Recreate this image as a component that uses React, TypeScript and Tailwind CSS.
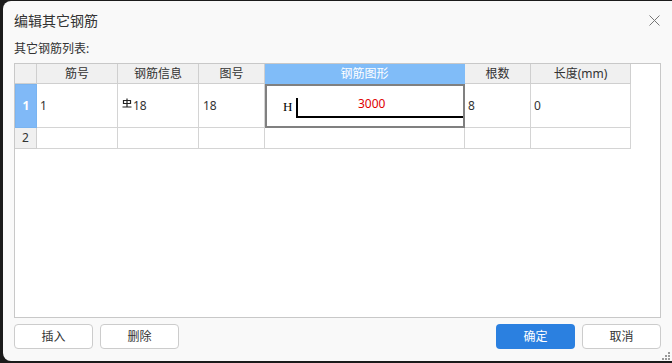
import React from "react";

const font = { fontFamily: '"Noto Sans", "Noto Sans CJK SC", sans-serif' };

const cols = [
  { title: "筋号", w: "w-[81px]" },
  { title: "钢筋信息", w: "w-[81px]" },
  { title: "图号", w: "w-[66px]" },
  { title: "钢筋图形", w: "w-[200px]", active: true },
  { title: "根数", w: "w-[66px]" },
  { title: "长度(mm)", w: "w-[100px]" },
];

function RebarSymbol() {
  return (
    <svg width="10" height="10" viewBox="0 0 10 10" className="mb-[5px] mr-[1px]">
      <path d="M1.5 2.5 h7 v3 h-7 z" fill="none" stroke="#222" strokeWidth="1.2" />
      <path d="M5 0.5 v8.5 M0.5 9 h9" fill="none" stroke="#222" strokeWidth="1.2" />
    </svg>
  );
}

function Shape() {
  return (
    <div className="relative h-full w-full">
      <span
        className="absolute left-[16px] top-[13px] text-[13px] leading-[15px] text-black"
        style={{ fontFamily: '"Liberation Serif", serif' }}
      >
        H
      </span>
      <div className="absolute left-[29px] top-[12px] h-[20px] w-[167px] border-b-2 border-l-2 border-black" />
      <span className="absolute left-[91px] top-[9px] text-[12px] text-[#e00000]">3000</span>
    </div>
  );
}

export default function App() {
  return (
    <div className="h-[363px] w-[672px] overflow-hidden bg-[#1b1b1b] pl-[3px] pt-[1px]" style={font}>
      <div className="flex h-[360px] w-[700px] flex-col rounded-[8px] bg-[#f9f9f9] text-[#333]">
        <div className="flex h-[38px] w-[657px] items-center justify-between pl-[11px]">
          <span className="text-[14px]">编辑其它钢筋</span>
          <svg width="11" height="11" viewBox="0 0 11 11" className="mt-[1px]">
            <path d="M0.5 0.5 L10.5 10.5 M10.5 0.5 L0.5 10.5" stroke="#777" strokeWidth="1" />
          </svg>
        </div>
        <div className="ml-[11px] h-[24px] pt-[1px] text-[12px]">其它钢筋列表:</div>
        <div className="ml-[11px] h-[255px] w-[647px] border border-[#c8c8c8] bg-white text-[12px]">
          <div className="flex h-[20px]">
            <div className="w-[22px] border-b border-r border-[#cfcfcf] bg-[#f0f0f0]" />
            {cols.map((c) => (
              <div
                key={c.title}
                className={`${c.w} flex items-center justify-center border-b border-r ${
                  c.active ? "border-[#80bcf8] bg-[#80bcf8] text-white" : "border-[#cfcfcf] bg-[#f0f0f0] text-[#333]"
                }`}
              >
                {c.title}
              </div>
            ))}
          </div>
          <div className="flex h-[44px]">
            <div className="flex w-[22px] items-center justify-center border border-[#7ab4f0] bg-[#80b9f7] font-bold text-white">
              1
            </div>
            <div className="flex w-[81px] items-center border-b border-r border-[#d4d4d4] pl-[3px]">1</div>
            <div className="flex w-[81px] items-center border-b border-r border-[#d4d4d4] pl-[4px]">
              <RebarSymbol />
              18
            </div>
            <div className="flex w-[66px] items-center border-b border-r border-[#d4d4d4] pl-[4px]">18</div>
            <div className="w-[200px] border-2 border-[#808080]">
              <Shape />
            </div>
            <div className="flex w-[66px] items-center border-b border-r border-[#d4d4d4] pl-[3px]">8</div>
            <div className="flex w-[100px] items-center border-b border-r border-[#d4d4d4] pl-[3px]">0</div>
          </div>
          <div className="flex h-[21px]">
            <div className="flex w-[22px] items-center justify-center border-b border-r border-[#cfcfcf] bg-[#f0f0f0]">
              2
            </div>
            {cols.map((c) => (
              <div key={c.title} className={`${c.w} border-b border-r border-[#d4d4d4]`} />
            ))}
          </div>
        </div>
        <div className="ml-[11px] mt-[6px] flex w-[647px] text-[12px]">
          <button className="h-[25px] w-[79px] rounded-[4px] border border-[#cccccc] bg-white">插入</button>
          <button className="ml-[7px] h-[25px] w-[79px] rounded-[4px] border border-[#cccccc] bg-white">删除</button>
          <button className="ml-auto h-[25px] w-[79px] rounded-[4px] bg-[#2b80e0] text-white">确定</button>
          <button className="ml-[7px] h-[25px] w-[79px] rounded-[4px] border border-[#cccccc] bg-white">取消</button>
        </div>
        <svg width="9" height="9" viewBox="0 0 9 9" className="ml-[659px] mt-[3px] shrink-0">
          <path d="M6 0h2v2h-2z M3 3h2v2h-2z M6 3h2v2h-2z M0 6h2v2h-2z M3 6h2v2h-2z M6 6h2v2h-2z" fill="#999" />
        </svg>
      </div>
    </div>
  );
}
